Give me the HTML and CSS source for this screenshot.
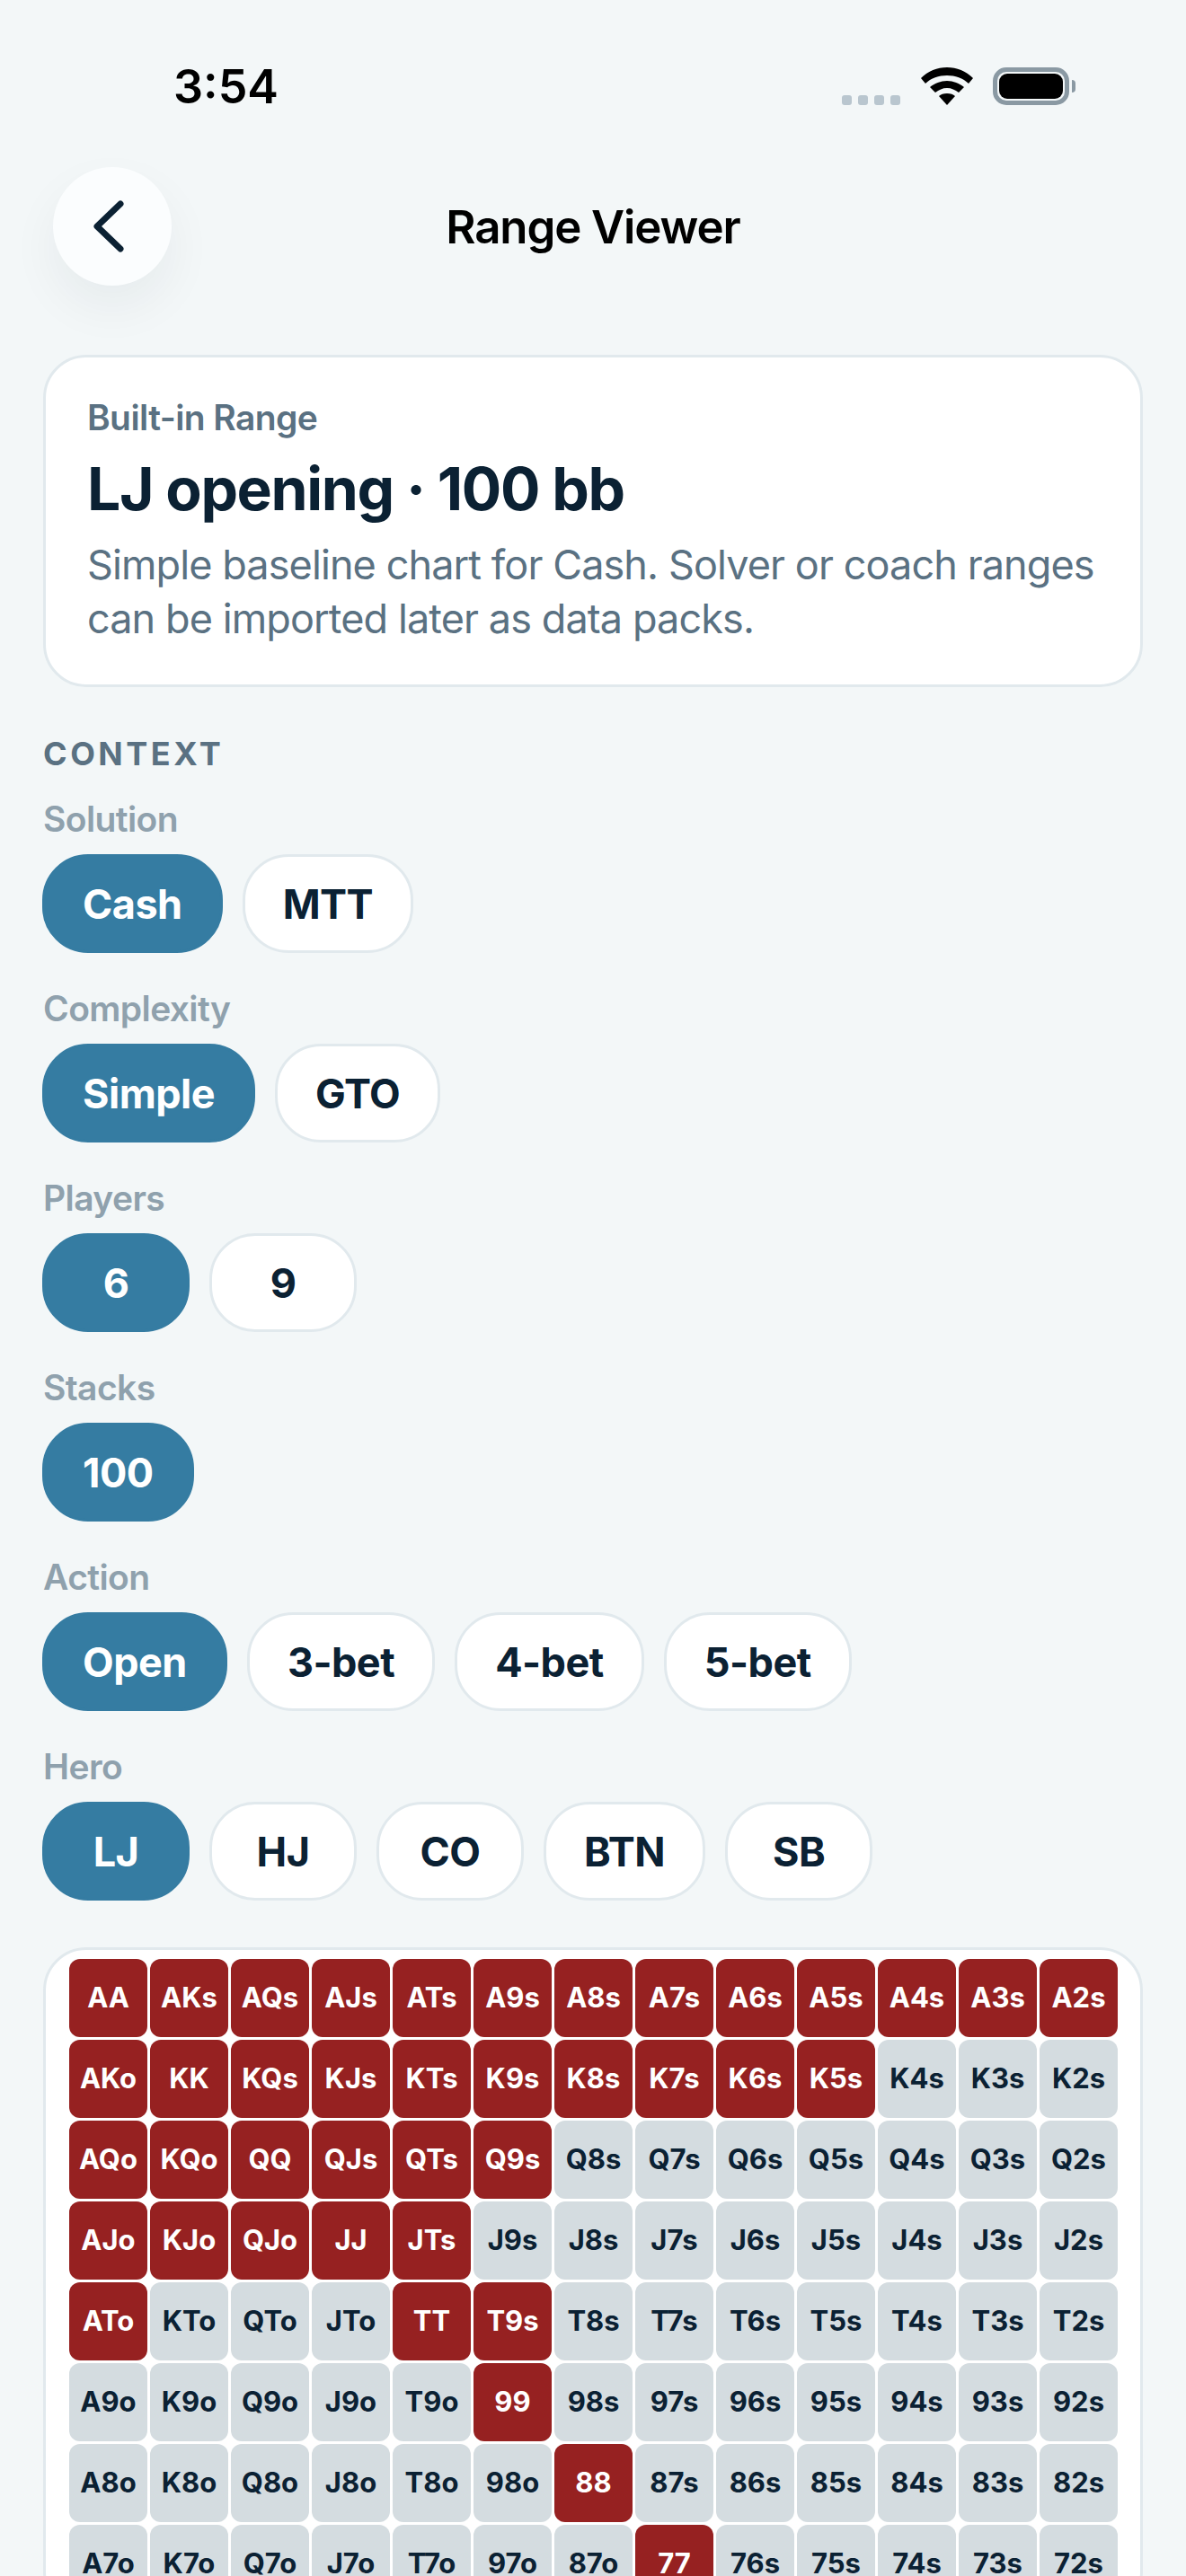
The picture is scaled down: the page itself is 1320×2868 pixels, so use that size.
FILE: index.html
```html
<!DOCTYPE html>
<html lang="en">
<head>
    <meta charset="UTF-8">
    <meta name="viewport" content="width=device-width, initial-scale=1.0">
    <title>Range Viewer</title>
    <link rel="stylesheet" href="styles.css">
</head>
<body>
    <div class="screen">
        <div class="status">
            <span class="time">3:54</span>
            <div class="status-icons">
                <div class="signal"><i></i><i></i><i></i><i></i></div>
                <svg class="wifi" width="58" height="42" viewBox="0 0 58 42">
                    <path d="M29 0C18 0 8 4 0 12l5 6c6-6 15-9 24-9s18 3 24 9l5-6C50 4 40 0 29 0Z"/>
                    <path d="M29 15c-7 0-14 3-19 7l6 6c4-3 8-5 13-5s9 2 13 5l6-6c-5-4-12-7-19-7Z"/>
                    <path d="M29 29c-4 0-7 1-9 3l9 10 9-10c-2-2-5-3-9-3Z"/>
                </svg>
                <div class="battery"><div class="battery-fill"></div></div>
                <div class="battery-nub"></div>
            </div>
        </div>

        <div class="nav">
            <button class="back">
                <svg width="36" height="62" viewBox="0 0 36 62">
                    <path d="M31 6 5 31l26 25" fill="none" stroke="#0b2133" stroke-width="7" stroke-linecap="round" stroke-linejoin="round"/>
                </svg>
            </button>
            <h1>Range Viewer</h1>
        </div>

        <div class="summary">
            <div class="summary-label">Built-in Range</div>
            <div class="summary-title">LJ opening · 100 bb</div>
            <p>Simple baseline chart for Cash. Solver or coach ranges can be imported later as data packs.</p>
        </div>

        <div class="section-title">CONTEXT</div>

        <div class="group">
            <div class="group-label">Solution</div>
            <div class="chips">
                <span class="chip active">Cash</span>
                <span class="chip">MTT</span>
            </div>
        </div>
        <div class="group">
            <div class="group-label">Complexity</div>
            <div class="chips">
                <span class="chip active">Simple</span>
                <span class="chip">GTO</span>
            </div>
        </div>
        <div class="group">
            <div class="group-label">Players</div>
            <div class="chips">
                <span class="chip active">6</span>
                <span class="chip">9</span>
            </div>
        </div>
        <div class="group">
            <div class="group-label">Stacks</div>
            <div class="chips">
                <span class="chip active">100</span>
            </div>
        </div>
        <div class="group">
            <div class="group-label">Action</div>
            <div class="chips">
                <span class="chip active">Open</span>
                <span class="chip">3-bet</span>
                <span class="chip">4-bet</span>
                <span class="chip">5-bet</span>
            </div>
        </div>
        <div class="group">
            <div class="group-label">Hero</div>
            <div class="chips">
                <span class="chip active">LJ</span>
                <span class="chip">HJ</span>
                <span class="chip">CO</span>
                <span class="chip">BTN</span>
                <span class="chip">SB</span>
            </div>
        </div>

        <div class="chart">
            <div class="grid">
                <div class="cell on">AA</div><div class="cell on">AKs</div><div class="cell on">AQs</div><div class="cell on">AJs</div><div class="cell on">ATs</div><div class="cell on">A9s</div><div class="cell on">A8s</div><div class="cell on">A7s</div><div class="cell on">A6s</div><div class="cell on">A5s</div><div class="cell on">A4s</div><div class="cell on">A3s</div><div class="cell on">A2s</div>
                <div class="cell on">AKo</div><div class="cell on">KK</div><div class="cell on">KQs</div><div class="cell on">KJs</div><div class="cell on">KTs</div><div class="cell on">K9s</div><div class="cell on">K8s</div><div class="cell on">K7s</div><div class="cell on">K6s</div><div class="cell on">K5s</div><div class="cell">K4s</div><div class="cell">K3s</div><div class="cell">K2s</div>
                <div class="cell on">AQo</div><div class="cell on">KQo</div><div class="cell on">QQ</div><div class="cell on">QJs</div><div class="cell on">QTs</div><div class="cell on">Q9s</div><div class="cell">Q8s</div><div class="cell">Q7s</div><div class="cell">Q6s</div><div class="cell">Q5s</div><div class="cell">Q4s</div><div class="cell">Q3s</div><div class="cell">Q2s</div>
                <div class="cell on">AJo</div><div class="cell on">KJo</div><div class="cell on">QJo</div><div class="cell on">JJ</div><div class="cell on">JTs</div><div class="cell">J9s</div><div class="cell">J8s</div><div class="cell">J7s</div><div class="cell">J6s</div><div class="cell">J5s</div><div class="cell">J4s</div><div class="cell">J3s</div><div class="cell">J2s</div>
                <div class="cell on">ATo</div><div class="cell">KTo</div><div class="cell">QTo</div><div class="cell">JTo</div><div class="cell on">TT</div><div class="cell on">T9s</div><div class="cell">T8s</div><div class="cell">T7s</div><div class="cell">T6s</div><div class="cell">T5s</div><div class="cell">T4s</div><div class="cell">T3s</div><div class="cell">T2s</div>
                <div class="cell">A9o</div><div class="cell">K9o</div><div class="cell">Q9o</div><div class="cell">J9o</div><div class="cell">T9o</div><div class="cell on">99</div><div class="cell">98s</div><div class="cell">97s</div><div class="cell">96s</div><div class="cell">95s</div><div class="cell">94s</div><div class="cell">93s</div><div class="cell">92s</div>
                <div class="cell">A8o</div><div class="cell">K8o</div><div class="cell">Q8o</div><div class="cell">J8o</div><div class="cell">T8o</div><div class="cell">98o</div><div class="cell on">88</div><div class="cell">87s</div><div class="cell">86s</div><div class="cell">85s</div><div class="cell">84s</div><div class="cell">83s</div><div class="cell">82s</div>
                <div class="cell">A7o</div><div class="cell">K7o</div><div class="cell">Q7o</div><div class="cell">J7o</div><div class="cell">T7o</div><div class="cell">97o</div><div class="cell">87o</div><div class="cell on">77</div><div class="cell">76s</div><div class="cell">75s</div><div class="cell">74s</div><div class="cell">73s</div><div class="cell">72s</div>
            </div>
        </div>
    </div>
</body>
</html>
```

FILE: styles.css
```css
body {
    margin: 0;
    font-family: Inter, "Noto Sans", sans-serif;
    background-color: #f3f7f8;
    color: #0b2133;
}
.screen {
    width: 1320px;
    height: 2868px;
    overflow: hidden;
    box-sizing: border-box;
    padding: 0 48px;
}

/* status bar */
.status {
    height: 186px;
    box-sizing: border-box;
    padding: 75px 75px 0 145px;
    display: flex;
    justify-content: space-between;
    align-items: flex-start;
}
.time {
    font-size: 52px;
    font-weight: 600;
    line-height: 44px;
    color: #000;
}
.status-icons {
    display: flex;
    align-items: center;
    height: 42px;
}
.signal {
    display: flex;
    gap: 7px;
    align-self: flex-end;
    margin-right: 23px;
}
.signal i {
    width: 11px;
    height: 11px;
    border-radius: 3px;
    background-color: #b9c6cf;
}
.wifi {
    margin-right: 22px;
}
.battery {
    width: 85px;
    height: 42px;
    box-sizing: border-box;
    border: 5px solid #8a99a3;
    border-radius: 15px;
    padding: 2px;
}
.battery-fill {
    height: 100%;
    background-color: #000;
    border-radius: 9px;
}
.battery-nub {
    width: 4px;
    height: 14px;
    margin-left: 3px;
    background-color: #8a99a3;
    border-radius: 0 4px 4px 0;
}

/* nav */
.nav {
    position: relative;
    height: 132px;
    display: flex;
    align-items: center;
    justify-content: center;
}
.nav h1 {
    margin: 0;
    font-size: 51px;
    font-weight: 600;
    letter-spacing: -1.1px;
    color: #000;
}
.back {
    position: absolute;
    left: 11px;
    top: 0;
    width: 132px;
    height: 132px;
    padding: 0 8px 0 0;
    border: none;
    border-radius: 50%;
    background-color: #fbfdfe;
    box-shadow: 0 24px 54px rgba(11, 33, 51, 0.055);
    display: flex;
    align-items: center;
    justify-content: center;
}

/* summary card */
.summary {
    margin-top: 77px;
    height: 370px;
    box-sizing: border-box;
    padding: 45px 46px;
    background-color: #fff;
    border: 3px solid #e1e9ed;
    border-radius: 48px;
}
.summary-label {
    font-size: 39px;
    font-weight: 600;
    line-height: 44px;
    letter-spacing: -0.6px;
    color: #5a7182;
}
.summary-title {
    margin-top: 17px;
    font-size: 66px;
    font-weight: 700;
    line-height: 80px;
    letter-spacing: -1.4px;
}
.summary p {
    margin: 15px 0 0;
    font-size: 45px;
    line-height: 60px;
    letter-spacing: -0.9px;
    color: #5a7182;
}

/* context */
.section-title {
    margin-top: 52px;
    font-size: 36px;
    font-weight: 700;
    line-height: 44px;
    letter-spacing: 3.5px;
    color: #5a7182;
}
.group {
    margin-bottom: 40px;
}
.section-title + .group {
    margin-top: 29px;
}
.group-label {
    font-size: 39px;
    font-weight: 600;
    line-height: 44px;
    letter-spacing: -0.6px;
    margin-bottom: 17px;
    color: #8fa1ad;
}
.chips {
    display: flex;
    gap: 22px;
    margin-left: -1px;
}
.chip {
    height: 110px;
    min-width: 164px;
    box-sizing: border-box;
    padding: 0 42px;
    display: flex;
    align-items: center;
    justify-content: center;
    font-size: 45px;
    font-weight: 700;
    letter-spacing: -0.5px;
    background-color: #fff;
    border: 3px solid #e1e9ed;
    border-radius: 51px;
}
.chip.active {
    background-color: #357ca2;
    border-color: #357ca2;
    color: #fff;
}

/* hand chart */
.chart {
    margin-top: 52px;
    padding: 10px 26px;
    background-color: #fff;
    border: 3px solid #e1e9ed;
    border-radius: 48px;
}
.grid {
    display: grid;
    grid-template-columns: repeat(13, 87px);
    grid-auto-rows: 87px;
    gap: 3px;
}
.cell {
    display: flex;
    align-items: center;
    justify-content: center;
    padding-bottom: 2px;
    box-sizing: border-box;
    font-size: 31px;
    font-weight: 700;
    border-radius: 12px;
    background-color: #d4dce0;
}
.cell.on {
    background-color: #962121;
    color: #fff;
}
```
